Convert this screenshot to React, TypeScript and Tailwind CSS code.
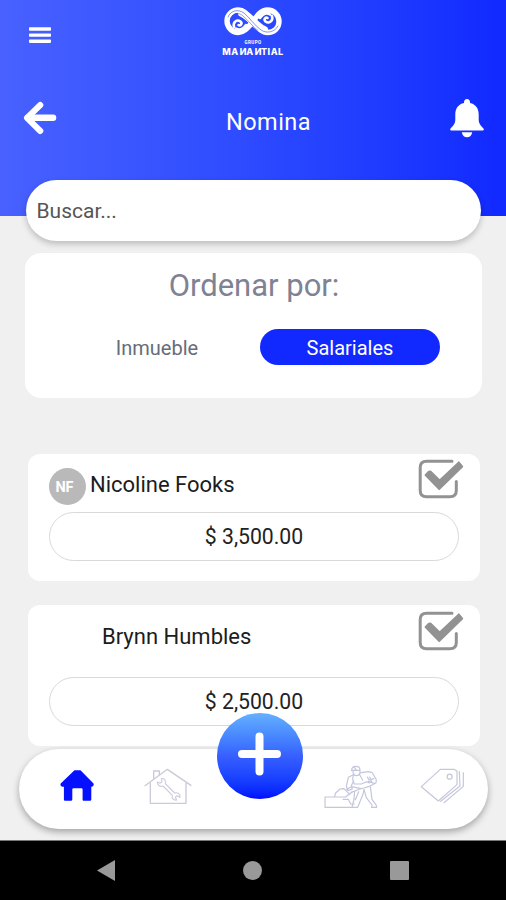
const payroll = [
  { name: "Nicoline Fooks", initials: "NF", amount: "$ 3,500.00" },
  { name: "Brynn Humbles", initials: null, amount: "$ 2,500.00" },
];

function MenuIcon() {
  return (
    <svg width="22" height="16" viewBox="0 0 22 16" fill="white">
      <rect y="0.300" width="22" height="3.4" rx="0.8" />
      <rect y="6.400" width="22" height="3.4" rx="0.8" />
      <rect y="12.500" width="22" height="3.4" rx="0.8" />
    </svg>
  );
}

function BackIcon() {
  return (
    <svg width="34" height="34" viewBox="0 0 34 34" fill="none" stroke="white" strokeWidth="6" strokeLinecap="round" strokeLinejoin="round">
      <path d="M17.3 4 L4 16.8 L17.3 30" />
      <path d="M5 16.8 H30" strokeWidth="6.6" />
    </svg>
  );
}

function BellIcon() {
  return (
    <svg width="34" height="39" viewBox="0 0 34 39" fill="white">
      <path d="M17 0c-2 0-3 1.4-3 3.2v.9C8.200 5.300 5.300 9.800 5.300 15.500v5.200c0 3.200-1.400 5.600-4.300 8.200-1.500 1.400-.8 2.700.8 2.700h30.400c1.600 0 2.300-1.300.8-2.700-2.900-2.600-4.300-5-4.300-8.200v-5.200C28.700 9.800 25.800 5.300 20 4.100v-.9C20 1.400 19 0 17 0z" />
      <path d="M11.800 33.300h10.400c-.4 3-2.400 5-5.200 5s-4.800-2-5.200-5z" />
    </svg>
  );
}

function Logo() {
  return (
    <div className="flex flex-col items-center text-white">
      <svg width="58" height="29" viewBox="0 0 58 29" fill="none" stroke="white" strokeLinecap="round">
        <path
          d="M29 14.500C24 7 20 3 14.500 3C8 3 3 8 3 14C3 20 8 25.500 14.500 25.500C21 25.500 25 19 29 14.500C33 9 37 3 43.500 3C50 3 55 8 55 14.500C55 21 50 25.500 43.500 25.500C38 25.500 34 21 29 14.500Z"
          strokeWidth="5.400"
        />
        <path d="M18 6C26 9 31 19 40 23" strokeWidth="8" />
        <path d="M10 20C8.500 15 13 12 16.500 14.500C19 17 16 19 14.500 18M12 21.500C15 23.500 19 22 22 18" strokeWidth="2.600" />
        <path d="M48 9C49.500 14 45 17 41.500 14.500C39 12 42 10 43.500 11M46 7.500C43 5.500 39 7 36 11" strokeWidth="2.600" />
        <path d="M4 10C7 3 14 2 20 6C26 11 30 18 37 23C43 27 51 25 54 19" stroke="#3049ff" strokeWidth="0.600" />
        <path d="M7 11C10 6 15 5 19 9C25 14 29 20 34 23.500" stroke="#3049ff" strokeWidth="0.500" />
      </svg>
      <span className="mt-[5px] text-[4.500px] leading-[4px] font-bold tracking-[0.4px]">GRUPO</span>
      <span className="mt-[2px] flex font-['Inter'] text-[9px] leading-[10px] font-extrabold tracking-[0.500px]">
        <span>MA</span>
        <span className="-scale-x-100">N</span>
        <span>A</span>
        <span className="-scale-x-100">N</span>
        <span>TIAL</span>
      </span>
    </div>
  );
}

function CheckIcon() {
  return (
    <svg width="47" height="40" viewBox="0 0 47 40" fill="none" stroke="#929292">
      <path d="M34 2.200H8.500Q2.200 2.200 2.200 8.500V31.500Q2.200 37.800 8.500 37.800H32Q38.300 37.800 38.300 31.500V22.500" strokeWidth="3" strokeLinecap="round" />
      <path
        d="M10.700 12.600L7.500 16.200L21.200 30.200L44.300 7.500L40.800 3.300L21.700 21.500L12.500 12.500Z"
        fill="#929292"
        strokeWidth="1.800"
        strokeLinejoin="round"
      />
    </svg>
  );
}

function HomeIcon() {
  return (
    <svg width="34" height="31" viewBox="0 0 34 31" fill="#0510ff">
      <path d="M14.500 0.300H20.500L33.500 13.500Q34.400 16.500 31.300 16.800V29.500Q31.300 30.700 30 30.700H23.500Q22.600 30.700 22.600 29.500V19.500Q22.600 18.300 21.500 18.300H13.500Q12.300 18.300 12.300 19.500V29.500Q12.300 30.700 11 30.700H5Q3.900 30.700 3.900 29.500V16.800Q-0.300 16.800 0.700 13.500Z" />
    </svg>
  );
}

function RepairIcon() {
  return (
    <svg width="48" height="37" viewBox="0 0 144 111" fill="none" stroke="#c9cada" strokeWidth="4" strokeLinejoin="round">
      <path d="M2 54L70 4L142 53" />
      <path d="M19 45V106H126V45M29 33V9H46V21" />
      <path d="M52 32C60 30 67 37 64 47L92 75C101 72 110 79 108 88L99 83L94 88L98 96C90 98 82 92 85 82L57 54C48 57 39 51 40 42L48 46L54 41Z" strokeWidth="3.200" />
    </svg>
  );
}

function WorkerIcon() {
  return (
    <svg width="54" height="44" viewBox="0 0 162 132" fill="none" stroke="#c3c6dc" strokeWidth="3.500" strokeLinecap="round" strokeLinejoin="round">
      {/* head and helmet */}
      <path d="M83 16C83 8 89 4 96 4C103 4 108 8 108 15V22C107 29 102 32 97 32C91 32 87 27 87 18M82 16H108M91 7L96 14" />
      {/* torso and arms */}
      <path d="M88 29L73 37L67 64L72 77L85 72L82 62L89 47" />
      <path d="M105 28L111 23L133 20L145 23L157 44L156 54L133 65L120 69L109 71L93 78L81 82" />
      <path d="M88 29L86 43L91 57L112 57L128 50L137 54M107 29L116 45M130 36L135 45L150 41M133 49L151 55M137 36L144 53" />
      {/* legs */}
      <path d="M92 78L90 102L84 127H101L117 88L120 73L127 98L144 120L143 127H158L157 121L144 103L139 65M104 80L94 104" />
      {/* shovel and pile */}
      <path d="M111 71L83 65L68 73M83 127H3V96H31L35 84L48 72L60 71L68 79L77 88M31 96H65L72 90L84 82M57 103L73 103L80 117L91 117" />
    </svg>
  );
}

function TagsIcon() {
  return (
    <svg width="45" height="37" viewBox="0 0 135 111" fill="none" stroke="#c5c7db" strokeWidth="3.600" strokeLinecap="round" strokeLinejoin="round">
      <path d="M61 4H102L111 9V50L55 99L4 56Z" />
      <circle cx="89" cy="26" r="7.500" />
      <path d="M118 11L120 54L62 100M130 14V55L72 104" />
    </svg>
  );
}

export default function App() {
  return (
    <div className="flex h-[900px] w-[506px] flex-col overflow-hidden bg-[#f0f0f0] font-['Roboto',sans-serif]">
      <header className="h-[216px] shrink-0 bg-gradient-to-r from-[#4861ff] to-[#1128ff]">
        <div className="grid h-[56px] grid-cols-3 px-[29px] pt-[7px]">
          <div className="pt-[20px]">
            <MenuIcon />
          </div>
          <Logo />
        </div>
        <div className="flex justify-between pt-[43px] pr-[22px] pl-[23px]">
          <div className="w-[34px] pt-[2px]">
            <BackIcon />
          </div>
          <h1 className="pt-[7px] pl-[30px] text-center text-[23.500px] leading-[32px] tracking-[0.500px] text-white">Nomina</h1>
          <BellIcon />
        </div>
      </header>

      <main className="-mt-[36px] flex flex-1 flex-col">
        <input
          placeholder="Buscar..."
          className="mx-auto h-[61px] w-[455px] shrink-0 rounded-full bg-white px-[11px] text-[21px] shadow-[0_3px_6px_rgba(0,0,0,0.22)] outline-none placeholder:text-[#555]"
        />

        <section className="mx-auto mt-[12px] h-[145px] w-[457px] shrink-0 rounded-[16px] bg-white pt-[14px]">
          <h2 className="pl-[2px] text-center text-[31px] leading-[38px] text-[#808294]">Ordenar por:</h2>
          <div className="mt-[24px] flex justify-center gap-[12px] text-[20px]">
            <button className="h-[36px] w-[181px] pt-[2px] text-[#666c7a]">Inmueble</button>
            <button className="h-[36px] w-[180px] rounded-full bg-[#1128ff] pt-[2px] pl-[1px] text-white">Salariales</button>
          </div>
        </section>

        <div className="mt-[56px] flex flex-col gap-[24px] pr-[26px] pl-[28px]">
          {payroll.map((person) => (
            <article key={person.name} className="rounded-[12px] bg-white px-[21px] pb-[20px]">
              <div className={person.initials ? "flex h-[58px]" : "flex h-[72px]"}>
                {person.initials ? (
                  <span className="mt-[14px] mr-[4px] flex size-[37px] items-center justify-center rounded-full bg-[#b9b9b9] pt-[2px] pr-[6px] text-[14.500px] font-bold text-white">
                    {person.initials}
                  </span>
                ) : (
                  <span className="w-[53px]" />
                )}
                <h3 className={`${person.initials ? "mt-[16px]" : "mt-[17px]"} flex-1 text-[22px] leading-[30px] text-[#1c1c1c]`}>
                  {person.name}
                </h3>
                <div className={person.initials ? "-mr-[6px] pt-[5px]" : "-mr-[6px] pt-[6px]"}>
                  <CheckIcon />
                </div>
              </div>
              <div className="flex h-[49px] items-center justify-center rounded-full border border-[#d9d9d9] pt-px text-[21.200px] text-[#222]">
                {person.amount}
              </div>
            </article>
          ))}
        </div>
      </main>

      <nav className="relative mx-auto mb-[11px] flex h-[80px] w-[469px] shrink-0 items-start rounded-full bg-white pl-[41px] shadow-[0_3px_7px_rgba(0,0,0,0.32)]">
        <div className="mt-[21px]">
          <HomeIcon />
        </div>
        <div className="mt-[19px] ml-[50px]">
          <RepairIcon />
        </div>
        <div className="mt-[16px] ml-[132px]">
          <WorkerIcon />
        </div>
        <div className="mt-[19px] ml-[42px]">
          <TagsIcon />
        </div>
        <button className="absolute -top-[36px] left-[198px] flex size-[86px] items-center justify-center rounded-full bg-gradient-to-b from-[#65b0ff] via-[#385fff] to-[#0508ff]">
          <svg width="44" height="44" viewBox="0 0 44 44" stroke="white" strokeWidth="8" strokeLinecap="round" className="overflow-visible">
            <path d="M21.500 2.500V37.500M4 20H39" />
          </svg>
        </button>
      </nav>

      <footer className="flex h-[60px] shrink-0 items-center justify-between border-t border-[#777] bg-black px-[97px]">
        <svg width="18" height="21" viewBox="0 0 18 21" fill="#999">
          <path d="M18 0V21L0 10.500Z" />
        </svg>
        <span className="size-[19px] rounded-full bg-[#999]" />
        <span className="size-[19px] rounded-[1px] bg-[#999]" />
      </footer>
    </div>
  );
}
